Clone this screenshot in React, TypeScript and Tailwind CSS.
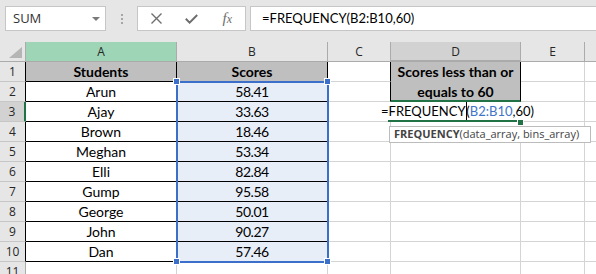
import type { ReactNode } from "react";

const students: [string, string][] = [
  ["Arun", "58.41"],
  ["Ajay", "33.63"],
  ["Brown", "18.46"],
  ["Meghan", "53.34"],
  ["Elli", "82.84"],
  ["Gump", "95.58"],
  ["George", "50.01"],
  ["John", "90.27"],
  ["Dan", "57.46"],
];

const cellFont = "font-['Lato',sans-serif] text-[14px] leading-[19px] text-black";
const uiFont = "font-['Open_Sans',sans-serif]";

const FormulaBar = () => (
  <div className={`h-[42px] bg-[#e6e6e6] flex items-start pt-[6px] ${uiFont}`}>
    {/* Name box */}
    <div className="ml-[5px] w-[101px] h-[25px] bg-white border border-[#c6c6c6] flex items-center justify-between pl-[7px] pr-[5px]">
      <span className="text-[13px] text-[#333]">SUM</span>
      <svg width="8" height="4" viewBox="0 0 8 4">
        <path d="M0 0 L8 0 L4 4 Z" fill="#7a7a7a" />
      </svg>
    </div>

    {/* Grip */}
    <div className="w-[31px] h-[25px] flex flex-col items-center justify-center gap-[2px]">
      <span className="w-[2px] h-[2px] bg-[#a6a6a6]" />
      <span className="w-[2px] h-[2px] bg-[#a6a6a6]" />
      <span className="w-[2px] h-[2px] bg-[#a6a6a6]" />
    </div>

    {/* Cancel / Enter / fx */}
    <div className="w-[109px] h-[25px] bg-white border border-[#c6c6c6] flex items-center pl-[1px]">
      <div className="w-[36px] flex justify-center">
        <svg width="11" height="11" viewBox="0 0 11 11">
          <path d="M0.5 0.5 L10.5 10.5 M10.5 0.5 L0.5 10.5" stroke="#6e6e6e" strokeWidth="1.4" />
        </svg>
      </div>
      <div className="w-[36px] flex justify-center">
        <svg width="13" height="10" viewBox="0 0 13 10">
          <path d="M0.8 4.8 L4.6 8.6 L12.2 1" stroke="#6e6e6e" strokeWidth="2" fill="none" />
        </svg>
      </div>
      <div className="w-[36px] flex justify-center">
        <span className="font-['Liberation_Serif',serif] italic text-[15px] text-[#6e6e6e] leading-none">
          f<span className="text-[12px]">x</span>
        </span>
      </div>
    </div>

    {/* Formula input */}
    <div className="ml-[4px] flex-1 -mr-[2px] h-[25px] bg-white border border-[#c6c6c6] flex items-center pl-[11px]">
      <span className="font-['Lato',sans-serif] text-[13px] text-black">=FREQUENCY(B2:B10,60)</span>
    </div>
  </div>
);

type CellProps = {
  children?: ReactNode;
  className?: string;
};

const Cell = ({ children, className = "" }: CellProps) => (
  <div className={`border-r border-b flex justify-center ${cellFont} ${className}`}>{children}</div>
);

const ColHead = ({ children, className = "" }: CellProps) => (
  <div
    className={`border-r border-b border-r-[#ababab] border-b-[#ababab] flex items-center justify-center ${uiFont} text-[12px] leading-[17px] text-[#262626] ${className}`}
  >
    {children}
  </div>
);

const RowHead = ({ children, className = "" }: CellProps) => (
  <div
    className={`border-r border-b border-b-[#c6c6c6] flex justify-center ${uiFont} text-[12px] leading-[19px] text-[#262626] ${className}`}
  >
    {children}
  </div>
);

const Sheet = () => (
  <div className="relative grid grid-cols-[26px_151px_151px_63px_130px_64px_1fr] auto-rows-[20px]">
    {/* Column headers */}
    <div className="border-r border-b border-r-[#ababab] border-b-[#ababab] bg-[#e6e6e6] flex items-end justify-end pr-[3px] pb-[3px]">
      <svg width="13" height="11" viewBox="0 0 13 11">
        <path d="M13 0 L13 11 L0 11 Z" fill="#b5b5b5" />
      </svg>
    </div>
    <ColHead className="bg-[#9fd5b7] border-r-[#8a8a8a]">A</ColHead>
    <ColHead className="bg-[#e6e6e6]">B</ColHead>
    <ColHead className="bg-[#e6e6e6]">C</ColHead>
    <ColHead className="bg-[#d2d2d2] border-b-2 border-b-[#217346] text-[#217346]">D</ColHead>
    <ColHead className="bg-[#e6e6e6]">E</ColHead>
    <ColHead className="bg-[#e6e6e6] border-r-0"></ColHead>

    {/* Row 1 */}
    <RowHead className="bg-[#e6e6e6] border-r-black">1</RowHead>
    <Cell className="bg-[#bfbfbf] border-black font-bold">Students</Cell>
    <Cell className="bg-[#bfbfbf] border-black font-bold">Scores</Cell>
    <Cell className="border-r-black border-b-[#d4d4d4]" />
    <div
      className={`row-span-2 bg-[#bfbfbf] border-r border-r-black border-b-2 border-b-[#217346] text-center font-bold ${cellFont} leading-[20px]`}
    >
      Scores less than or
      <br />
      equals to 60
    </div>
    <Cell className="border-[#d4d4d4]" />
    <Cell className="border-[#d4d4d4] border-r-0" />

    {/* Rows 2-10 */}
    {students.map(([name, score], i) => {
      const row = i + 2;
      const active = row === 3;
      return (
        <div key={name} className="contents">
          <RowHead
            className={
              active
                ? "bg-[#d2d2d2] border-r-2 border-r-[#217346] text-[#217346]"
                : "bg-[#e6e6e6] border-r-black"
            }
          >
            {row}
          </RowHead>
          <Cell className="border-black">{name}</Cell>
          <Cell className="bg-[#e8eef8] border-black text-[13.5px] tracking-[-0.5px]">{score}</Cell>
          <Cell className={row === 2 ? "border-r-black border-b-[#d4d4d4]" : "border-[#d4d4d4]"} />
          {row !== 2 && <Cell className="border-[#d4d4d4]" />}
          <Cell className="border-[#d4d4d4]" />
          <Cell className="border-[#d4d4d4] border-r-0" />
        </div>
      );
    })}

    {/* Row 11 */}
    <RowHead className="bg-[#e6e6e6] border-r-[#ababab]">11</RowHead>
    <Cell className="border-[#d4d4d4]" />
    <Cell className="border-[#d4d4d4]" />
    <Cell className="border-[#d4d4d4]" />
    <Cell className="border-[#d4d4d4]" />
    <Cell className="border-[#d4d4d4]" />
    <Cell className="border-[#d4d4d4] border-r-0" />

    {/* Selected range B2:B10 */}
    <div className="absolute left-[176px] top-[39px] w-[153px] h-[182px] border-2 border-[#3b6fc9] pointer-events-none" />
    <span className="absolute left-[173px] top-[36px] w-[7px] h-[7px] bg-[#3b6fc9] border border-white" />
    <span className="absolute left-[324px] top-[36px] w-[7px] h-[7px] bg-[#3b6fc9] border border-white" />
    <span className="absolute left-[173px] top-[216px] w-[7px] h-[7px] bg-[#3b6fc9] border border-white" />
    <span className="absolute left-[324px] top-[216px] w-[7px] h-[7px] bg-[#3b6fc9] border border-white" />

    {/* In-cell editor for D3 */}
    <div className="absolute left-[379px] top-[60px] w-[155px] h-[19px] bg-white pl-[2px] flex font-['Lato',sans-serif] text-[13px] leading-[19px] text-black">
      <span>=FREQUENCY</span>
      <span className="w-[1px] h-[19px] bg-black" />
      <span>(</span>
      <span className="text-[#3f74c9]">B2:B10</span>
      <span>,60)</span>
    </div>
    <div className="absolute left-[388px] top-[78px] w-[130px] h-[2px] bg-[#217346]" />
    <span className="absolute left-[517px] top-[77px] w-[7px] h-[7px] bg-[#217346] border border-white" />

    {/* Function tooltip */}
    <div className="absolute left-[389px] top-[84px] w-[202px] h-[17px] bg-white border border-[#bcbcbc] flex items-center pl-[4px] font-['Open_Sans',sans-serif] text-[11px] text-[#444]">
      <span className="font-bold">FREQUENCY</span>
      <span>(data_array, bins_array)</span>
    </div>
  </div>
);

export default function App() {
  return (
    <div className="w-[596px] h-[274px] overflow-hidden bg-white">
      <FormulaBar />
      <Sheet />
    </div>
  );
}
